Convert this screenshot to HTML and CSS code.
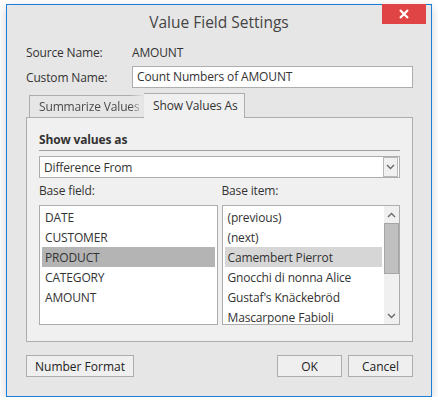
FILE: index.html
```html
<!DOCTYPE html>
<html lang="en">

<head>
    <meta charset="UTF-8">
    <meta name="viewport" content="width=device-width, initial-scale=1.0">
    <title>Value Field Settings</title>
    <link rel="stylesheet" href="styles.css">
</head>

<body>
    <div class="dialog">
        <div class="titlebar">
            <span class="title">Value Field Settings</span>
            <a class="close" href="#">
                <svg width="12" height="12" viewBox="0 0 12 12">
                    <path d="M2 2 L10 10 M10 2 L2 10" stroke="#ffffff" stroke-width="2.2" fill="none" />
                </svg>
            </a>
        </div>

        <div class="content">
            <div class="row">
                <span class="label">Source Name:</span>
                <span>AMOUNT</span>
            </div>
            <div class="row">
                <span class="label">Custom Name:</span>
                <div class="input">Count Numbers of AMOUNT</div>
            </div>

            <div class="tabs">
                <div class="tab">Summarize Values</div>
                <div class="tab active">Show Values As</div>
            </div>

            <div class="panel">
                <div class="group-title">Show values as</div>
                <div class="combo">
                    <span>Difference From</span>
                    <span class="combo-btn">
                        <svg width="9" height="6" viewBox="0 0 9 6">
                            <path d="M1 1 L4.5 4.5 L8 1" stroke="#6a6a6a" stroke-width="1.4" fill="none" />
                        </svg>
                    </span>
                </div>

                <div class="lists">
                    <div class="col">
                        <div class="caption">Base field:</div>
                        <div class="listbox">
                            <div class="item">DATE</div>
                            <div class="item">CUSTOMER</div>
                            <div class="item selected">PRODUCT</div>
                            <div class="item">CATEGORY</div>
                            <div class="item">AMOUNT</div>
                        </div>
                    </div>
                    <div class="col">
                        <div class="caption">Base item:</div>
                        <div class="listbox scrolled">
                            <div class="items">
                                <div class="item">(previous)</div>
                                <div class="item">(next)</div>
                                <div class="item focused">Camembert Pierrot</div>
                                <div class="item">Gnocchi di nonna Alice</div>
                                <div class="item">Gustaf's Knäckebröd</div>
                                <div class="item">Mascarpone Fabioli</div>
                            </div>
                            <div class="scrollbar">
                                <svg class="arrow" width="9" height="6" viewBox="0 0 9 6">
                                    <path d="M1 5 L4.5 1.5 L8 5" stroke="#6a6a6a" stroke-width="1.4" fill="none" />
                                </svg>
                                <div class="track">
                                    <div class="thumb"></div>
                                </div>
                                <svg class="arrow" width="9" height="6" viewBox="0 0 9 6">
                                    <path d="M1 1 L4.5 4.5 L8 1" stroke="#6a6a6a" stroke-width="1.4" fill="none" />
                                </svg>
                            </div>
                        </div>
                    </div>
                </div>
            </div>

            <div class="buttons">
                <button class="btn wide">Number Format</button>
                <span class="spacer"></span>
                <button class="btn">OK</button>
                <button class="btn">Cancel</button>
            </div>
        </div>
    </div>
</body>

</html>
```

FILE: styles.css
```css
body {
    margin: 0;
    background: #ffffff;
    font-family: "Open Sans", "Noto Sans", sans-serif;
    font-size: 12px;
    letter-spacing: -0.15px;
    color: #333333;
}

.dialog {
    position: relative;
    margin: 4px 0 0 6px;
    width: 424px;
    height: 391px;
    border: 1px solid #1a7dd6;
    background: #e6e6e6;
    box-shadow: 0 3px 10px rgba(0, 0, 0, 0.18);
}

.titlebar {
    height: 36px;
    display: flex;
    justify-content: center;
    align-items: center;
}

.title {
    font-size: 15.5px;
    letter-spacing: 0;
    color: #444444;
    margin-top: -3px;
}

.close {
    position: absolute;
    top: -1px;
    right: 5px;
    width: 44px;
    height: 20px;
    background: #e04444;
    display: flex;
    justify-content: center;
    align-items: center;
}

.content {
    padding: 0 18px 0 19px;
}

.row {
    display: flex;
    align-items: center;
    height: 22px;
    margin-bottom: 3px;
}

.label {
    width: 106px;
}

.input {
    flex: 1;
    height: 20px;
    line-height: 20px;
    border: 1px solid #adadad;
    background: #ffffff;
    padding-left: 4px;
}

.tabs {
    display: flex;
    align-items: flex-end;
    margin-top: 5px;
    padding-left: 3px;
    height: 24px;
}

.tab {
    width: 104px;
    height: 21px;
    line-height: 21px;
    padding-left: 9px;
    border: 1px solid #adadad;
    border-bottom: 0;
    color: #4a4a4a;
    white-space: nowrap;
    overflow: hidden;
    -webkit-mask-image: linear-gradient(to right, #000 88%, transparent 100%);
}

.tab.active {
    width: 91px;
    height: 24px;
    line-height: 24px;
    background: #f0f0f0;
    border-left: 0;
    color: #333333;
    margin-bottom: -1px;
    position: relative;
    -webkit-mask-image: none;
}

.panel {
    border: 1px solid #adadad;
    background: #f0f0f0;
    padding: 10px 12px 16px 12px;
}

.group-title {
    font-weight: bold;
    height: 22px;
    line-height: 23px;
    border-bottom: 1px solid #a0a0a0;
    margin-bottom: 5px;
}

.combo {
    height: 20px;
    border: 1px solid #adadad;
    background: #ffffff;
    display: flex;
    align-items: center;
    justify-content: space-between;
    padding-left: 4px;
}

.combo-btn {
    width: 13px;
    height: 18px;
    margin-right: 1px;
    border: 1px solid #b8b8b8;
    background: #f0f0f0;
    display: flex;
    justify-content: center;
    align-items: center;
}

.lists {
    display: flex;
    gap: 4px;
}

.col {
    flex: 1;
}

.caption {
    height: 27px;
    line-height: 25px;
}

.listbox {
    height: 117px;
    border: 1px solid #adadad;
    background: #ffffff;
    padding: 1px 2px 0 2px;
    overflow: hidden;
}

.listbox.scrolled {
    display: flex;
    padding-right: 0;
}

.items {
    flex: 1;
    overflow: hidden;
}

.item {
    height: 20px;
    line-height: 21px;
    padding-left: 3px;
    white-space: nowrap;
}

.item.selected {
    background: #b4b4b4;
}

.item.focused {
    background: #d6d6d6;
}

.scrollbar {
    width: 15px;
    margin: -1px 0 0 2px;
    background: #f0f0f0;
    display: flex;
    flex-direction: column;
    align-items: center;
}

.arrow {
    margin: 6px 0 5px 0;
}

.track {
    flex: 1;
    width: 100%;
}

.thumb {
    height: 51px;
    background: #c0c0c0;
    border: 1px solid #a6a6a6;
    box-sizing: border-box;
}

.buttons {
    display: flex;
    gap: 6px;
    margin-top: 13px;
}

.spacer {
    flex: 1;
}

.btn {
    width: 65px;
    height: 22px;
    border: 1px solid #adadad;
    background: #efefef;
    font-family: "Open Sans", "Noto Sans", sans-serif;
    font-size: 12px;
    color: #222222;
    padding: 0;
}

.btn.wide {
    width: 108px;
}
```
